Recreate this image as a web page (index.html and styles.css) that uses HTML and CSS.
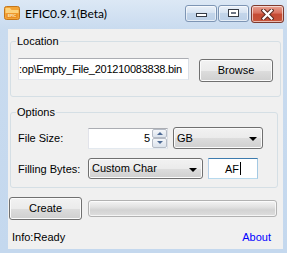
FILE: index.html
```html
<!DOCTYPE html>
<html lang="en">
<head>
    <meta charset="UTF-8">
    <title>EFIC0.9.1(Beta)</title>
    <link rel="stylesheet" href="styles.css">
</head>
<body>
    <div class="window">
        <!-- Title bar -->
        <div class="titlebar">
            <svg class="app-icon" width="16" height="16" viewBox="0 0 16 16">
                <rect x="0.5" y="1.5" width="15" height="13" rx="2" fill="#f3a436" stroke="#c4761a"/>
                <path d="M1.5 3 h4.5 l1.5 2 h7 v3 h-13 z" fill="#fcd27c"/>
                <rect x="2.5" y="8.5" width="11" height="4.5" fill="#e98c22"/>
                <text x="8" y="12.3" font-size="3.8" text-anchor="middle" fill="#fff3c4" font-family="Liberation Sans" font-weight="bold">EFIC</text>
            </svg>
            <span class="title">EFIC0.9.1(Beta)</span>
            <div class="caption-buttons">
                <div class="cap-btn cap-min"><span class="glyph-min"></span></div>
                <div class="cap-btn cap-max"><span class="glyph-max"></span></div>
                <div class="cap-btn cap-close">
                    <svg width="13" height="11" viewBox="0 0 13 11">
                        <path d="M2.5 1.5 L10.5 9.5 M10.5 1.5 L2.5 9.5" stroke="#5b2a20" stroke-width="4.2" stroke-linecap="square"/>
                        <path d="M2.5 1.5 L10.5 9.5 M10.5 1.5 L2.5 9.5" stroke="#ffffff" stroke-width="2.2" stroke-linecap="square"/>
                    </svg>
                </div>
            </div>
        </div>

        <!-- Client area -->
        <div class="client">
            <fieldset class="group group-location">
                <legend>Location</legend>
                <div class="row">
                    <div class="textbox path">:op\Empty_File_201210083838.bin</div>
                    <div class="win-btn browse">Browse</div>
                </div>
            </fieldset>

            <fieldset class="group group-options">
                <legend>Options</legend>
                <div class="row">
                    <span class="field-label">File Size:</span>
                    <div class="textbox numeric">
                        <span class="numeric-value">5</span>
                        <div class="spin">
                            <div class="spin-btn"><span class="arrow-up"></span></div>
                            <div class="spin-btn"><span class="arrow-down"></span></div>
                        </div>
                    </div>
                    <div class="win-btn combo unit">GB<span class="combo-arrow"></span></div>
                </div>
                <div class="row">
                    <span class="field-label">Filling Bytes:</span>
                    <div class="win-btn combo filling">Custom Char<span class="combo-arrow"></span></div>
                    <div class="textbox focused char">AF<span class="caret"></span></div>
                </div>
            </fieldset>

            <div class="actions">
                <div class="win-btn create">Create</div>
                <div class="progress"></div>
            </div>

            <div class="status">
                <span>Info:Ready</span>
                <span class="about">About</span>
            </div>
        </div>
    </div>
</body>
</html>
```

FILE: styles.css
```css
body {
    margin: 0;
    width: 287px;
    height: 253px;
    overflow: hidden;
    font-family: 'Liberation Sans', Arial, sans-serif;
    font-size: 11px;
    color: #000;
    background: linear-gradient(#dce8f5 0, #c9dbef 29px, #c4d8ee 100%);
}

.window {
    display: flex;
    flex-direction: column;
    height: 253px;
}

/* Title bar */
.titlebar {
    display: flex;
    align-items: flex-start;
    height: 29px;
    padding: 0 3px 0 4px;
    flex-shrink: 0;
}

.app-icon {
    margin-top: 5px;
}

.title {
    margin: 6px 0 0 5px;
    font-family: Lato, 'Liberation Sans', sans-serif;
    font-size: 12px;
    line-height: 16px;
    color: #000;
}

.caption-buttons {
    display: flex;
    margin-left: auto;
    margin-top: 5px;
}

.cap-btn {
    display: flex;
    justify-content: center;
    box-sizing: border-box;
    height: 17px;
    border: 1px solid #7d95b4;
    border-radius: 3px;
    background: linear-gradient(#eaf1f9 0%, #d7e3f1 45%, #c3d5ea 50%, #bcd0e7 100%);
    box-shadow: inset 0 0 0 1px rgba(255, 255, 255, 0.6);
}

.cap-min {
    width: 32px;
    margin-right: 1px;
}

.cap-max {
    width: 31px;
    margin-right: 2px;
}

.cap-close {
    width: 33px;
    height: 18px;
    align-items: center;
    border-color: #7e3a2e;
    background: linear-gradient(#e8a292 0%, #d8705d 45%, #c54b34 50%, #c7553b 100%);
}

.glyph-min {
    width: 9px;
    height: 2px;
    margin-top: 7px;
    background: #fff;
    border: 1px solid #353b45;
}

.glyph-max {
    width: 9px;
    height: 6px;
    margin-top: 3px;
    background: #fff;
    border: 1px solid #353b45;
    box-shadow: inset 0 0 0 2px #fff, inset 0 0 0 3px #6d7685;
}

/* Client area */
.client {
    flex: 1;
    margin: 0 4px 4px 8px;
    background: #f0f0f0;
}

.group {
    margin: 0 5px 0 2px;
    border: 1px solid #d5dfe5;
    border-radius: 3px;
}

.group legend {
    margin-left: -2px;
    padding: 0 1px;
    line-height: 13px;
}

.group-location {
    margin-top: 6px;
    padding: 10px 7px 14px;
}

.group-options {
    margin-top: 9px;
    padding: 8px 7px 8px;
}

.row {
    display: flex;
    align-items: center;
}

.group-location .row {
    align-items: flex-start;
}

.group-options .row + .row {
    margin-top: 9px;
}

.textbox {
    box-sizing: border-box;
    background: #fff;
    border: 1px solid;
    border-color: #abadb3 #dbdfe6 #e3e9ef #e2e3ea;
}

.path {
    width: 171px;
    height: 22px;
    line-height: 20px;
    letter-spacing: -0.25px;
    white-space: nowrap;
    overflow: hidden;
}

.win-btn {
    box-sizing: border-box;
    border: 1px solid #707070;
    border-radius: 3px;
    background: linear-gradient(#f2f2f2 0%, #ebebeb 50%, #dddddd 51%, #cfcfcf 100%);
    box-shadow: inset 0 0 0 1px #fbfbfb;
    text-align: center;
}

.browse {
    width: 74px;
    height: 23px;
    margin: 1px 0 0 10px;
    line-height: 21px;
}

.field-label {
    width: 70px;
}

.numeric {
    display: flex;
    width: 80px;
    height: 21px;
}

.numeric-value {
    flex: 1;
    text-align: right;
    padding-right: 2px;
    line-height: 19px;
}

.spin {
    display: flex;
    flex-direction: column;
    width: 15px;
}

.spin-btn {
    display: flex;
    justify-content: center;
    align-items: center;
    flex: 1;
    box-sizing: border-box;
    border: 1px solid #b6bcc6;
    border-radius: 2px;
    background: linear-gradient(#f4f6f9, #dce3ec);
}

.arrow-up {
    border-left: 3px solid transparent;
    border-right: 3px solid transparent;
    border-bottom: 3px solid #4d6a94;
}

.arrow-down {
    border-left: 3px solid transparent;
    border-right: 3px solid transparent;
    border-top: 3px solid #4d6a94;
}

.combo {
    position: relative;
    height: 22px;
    padding-left: 3px;
    text-align: left;
    line-height: 20px;
}

.combo-arrow {
    position: absolute;
    right: 5px;
    top: 9px;
    border-left: 4px solid transparent;
    border-right: 4px solid transparent;
    border-top: 4px solid #000;
}

.unit {
    width: 90px;
    margin-left: 5px;
}

.filling {
    width: 115px;
    height: 21px;
    line-height: 19px;
}

.char {
    display: flex;
    justify-content: center;
    align-items: center;
    width: 50px;
    height: 21px;
    margin-left: 5px;
}

.focused {
    border-color: #3d7bad #a4c9e3 #b7d9ed #b5cfe7;
}

.caret {
    width: 1px;
    height: 13px;
    margin-left: 1px;
    background: #000;
}

.actions {
    display: flex;
    align-items: flex-start;
    margin-top: 9px;
}

.create {
    width: 73px;
    height: 23px;
    margin-left: 1px;
    line-height: 21px;
}

.progress {
    box-sizing: border-box;
    width: 189px;
    height: 17px;
    margin: 3px 0 0 6px;
    border: 1px solid #b2b2b2;
    border-radius: 3px;
    background: linear-gradient(#f4f4f4 0%, #e2e2e2 40%, #d3d3d3 60%, #dedede 100%);
    box-shadow: inset 0 0 0 1px rgba(255, 255, 255, 0.7);
}

.status {
    display: flex;
    justify-content: space-between;
    margin-top: 11px;
    padding: 0 12px 0 4px;
    line-height: 13px;
}

.about {
    color: #0000ff;
}
```
